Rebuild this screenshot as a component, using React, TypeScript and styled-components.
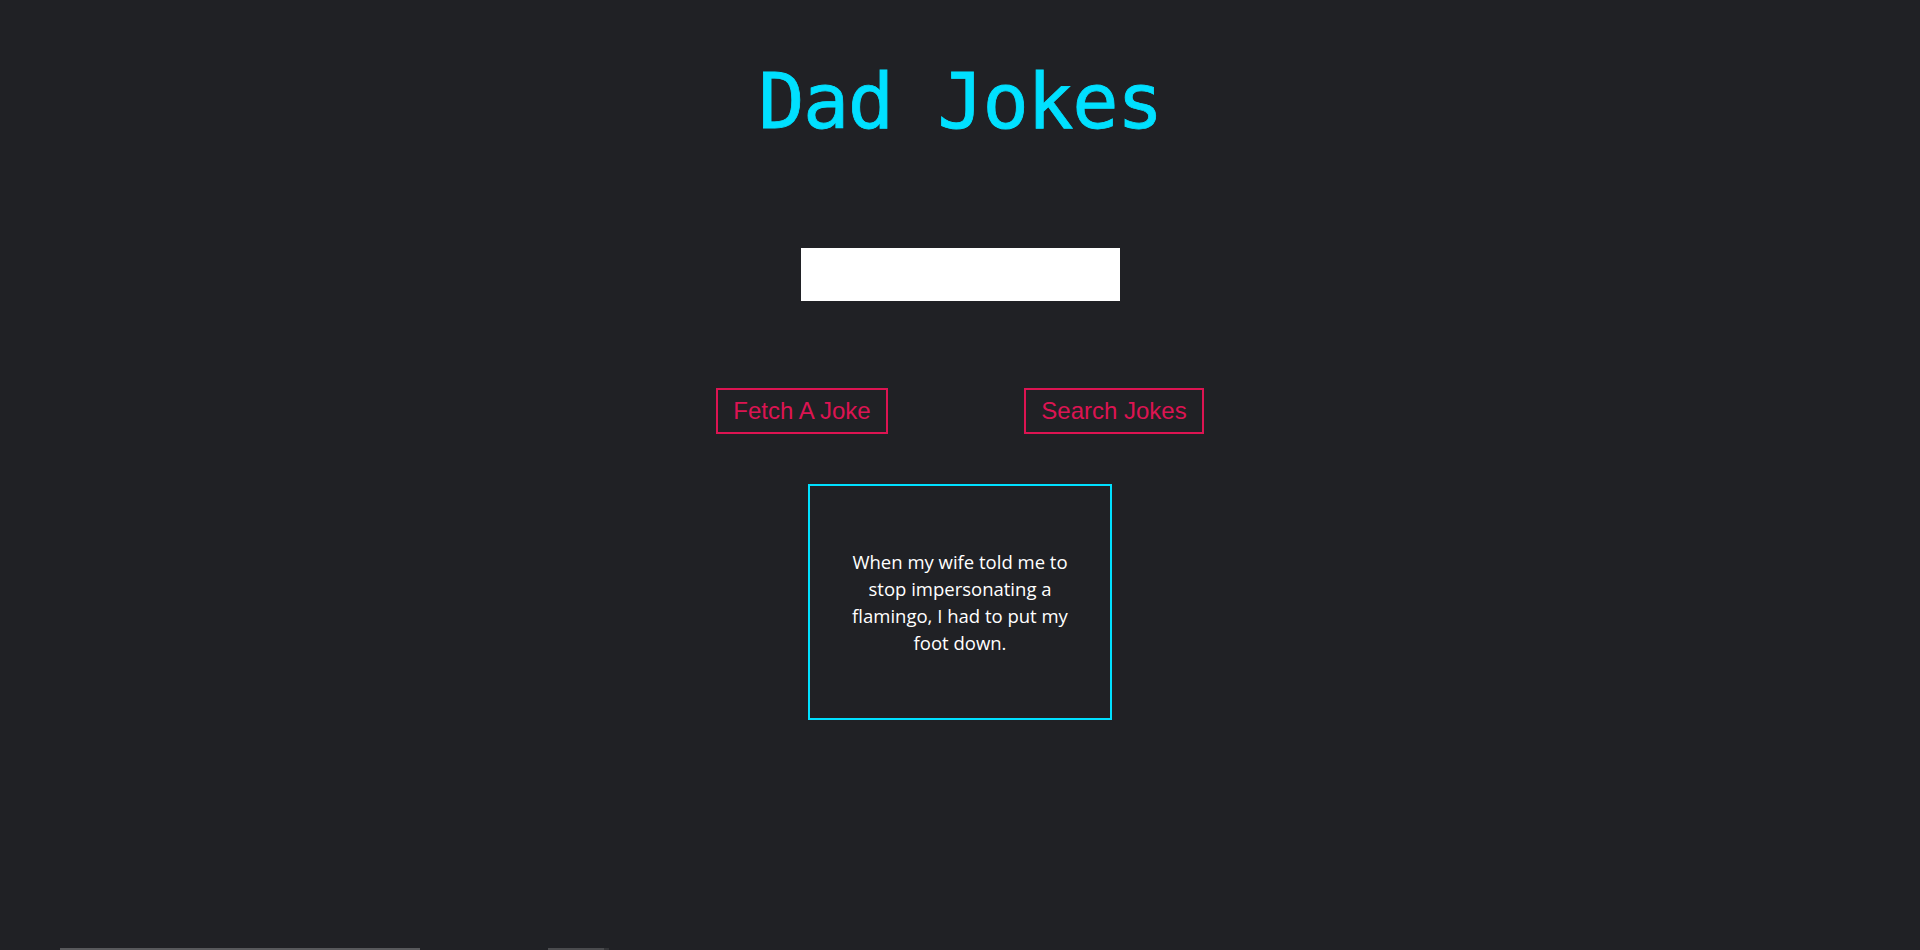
import { FC } from "react";
import styled, { createGlobalStyle } from "styled-components";

const GlobalStyle = createGlobalStyle`
  html, body {
    margin: 0;
    padding: 0;
    background-color: #202125;
    overflow: hidden;
  }
`;

const Page = styled.div`
  min-height: 100vh;
  background-color: #202125;
  display: flex;
  flex-direction: column;
  align-items: center;
`;

const Title = styled.h1`
  margin: 63px 0 0;
  font-family: "DejaVu Sans Mono", "Liberation Mono", monospace;
  font-weight: normal;
  font-size: 77px;
  line-height: 78px;
  letter-spacing: -1.5px;
  color: #00e0ff;
  -webkit-text-stroke: 0.8px #00e0ff;
`;

const SearchInput = styled.input`
  margin-top: 107px;
  width: 319px;
  height: 53px;
  box-sizing: border-box;
  border: none;
  outline: none;
  background: #fff;
  padding: 0 10px;
  font-size: 18px;
`;

const ButtonRow = styled.div`
  margin-top: 87px;
  display: flex;
  gap: 136px;
`;

const Btn = styled.button<{ $w: number }>`
  width: ${(p) => p.$w}px;
  height: 46px;
  box-sizing: border-box;
  background: transparent;
  border: 2px solid #dc1452;
  color: #dc1452;
  font-family: "Liberation Sans", Arial, sans-serif;
  font-size: 24px;
  padding: 0;
  cursor: pointer;
`;

const JokeCard = styled.div`
  margin-top: 50px;
  width: 304px;
  height: 236px;
  box-sizing: border-box;
  border: 2px solid #00e0ff;
  padding: 0 28px;
  display: flex;
  align-items: center;
  justify-content: center;
  text-align: center;
  color: #fff;
  font-family: "Open Sans", "Noto Sans", sans-serif;
  font-size: 18.5px;
  line-height: 27px;
`;

const Footer = styled.div`
  margin-top: 228px;
  align-self: stretch;
  display: flex;
  align-items: flex-start;
  padding-left: 60px;
  gap: 128px;
`;

const FooterBox = styled.div`
  width: 360px;
  height: 30px;
  box-sizing: border-box;
  border: 2px solid #58595c;
  border-bottom: none;
`;

const FooterBlock = styled.div`
  width: 56px;
  height: 30px;
  background: #4a4b4e;
  border-right: 5px solid #333437;
`;

const App: FC = () => {
  return (
    <Page>
      <GlobalStyle />
      <Title>Dad Jokes</Title>
      <SearchInput type="text" />
      <ButtonRow>
        <Btn $w={172}>Fetch A Joke</Btn>
        <Btn $w={180}>Search Jokes</Btn>
      </ButtonRow>
      <JokeCard>
        When my wife told me to stop impersonating a flamingo, I had to put my
        foot down.
      </JokeCard>
      <Footer>
        <FooterBox />
        <FooterBlock />
      </Footer>
    </Page>
  );
};

export default App;
